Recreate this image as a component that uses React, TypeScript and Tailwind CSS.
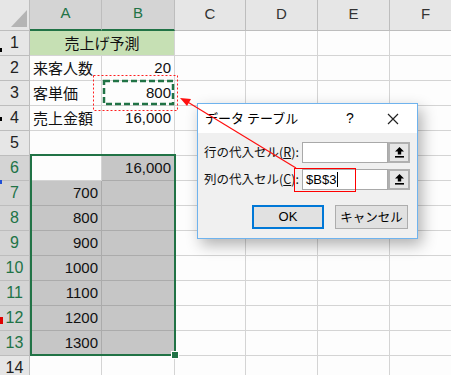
import React from "react";

const jp = { fontFamily: '"Noto Sans CJK JP", "Noto Sans", sans-serif' };
const num = { fontFamily: '"Liberation Sans", "Noto Sans CJK JP", sans-serif' };

const cols = ["A", "B", "C", "D", "E", "F"];

type Cell = { text?: string; right?: boolean; jp?: boolean; sel?: boolean };

function rowData(r: number): Cell[] {
  const base: Cell[] = [{}, {}];
  if (r === 2) {
    base[0] = { text: "来客人数", jp: true };
    base[1] = { text: "20", right: true };
  }
  if (r === 3) {
    base[0] = { text: "客単価", jp: true };
    base[1] = { text: "800", right: true };
  }
  if (r === 4) {
    base[0] = { text: "売上金額", jp: true };
    base[1] = { text: "16,000", right: true };
  }
  if (r === 6) {
    base[0] = {};
    base[1] = { text: "16,000", right: true, sel: true };
  }
  if (r >= 7 && r <= 13) {
    base[0] = { text: String(700 + (r - 7) * 100), right: true, sel: true };
    base[1] = { sel: true };
  }
  return base;
}

function UpArrow() {
  return (
    <svg width="11" height="13" viewBox="0 0 11 13">
      <polygon points="5.5,1 10,5.5 7.2,5.5 7.2,8.5 3.8,8.5 3.8,5.5 1,5.5" fill="#000" />
      <rect x="1" y="10" width="9" height="1.6" fill="#000" />
    </svg>
  );
}

export default function App() {
  const rows = Array.from({ length: 14 }, (_, i) => i + 1);
  return (
    <div className="relative w-[451px] h-[375px] overflow-hidden bg-[#fdfdfd]">
      <div
        className="grid grid-cols-[30px_72px_73px_71px_72px_72px_72px] grid-rows-[31px_repeat(14,25px)]"
        style={num}
      >
        {/* header row */}
        <div className="relative bg-[#e6e6e6] border-r border-b border-[#bdbdbd]">
          <svg className="absolute left-0 top-0" width="30" height="30">
            <polygon points="11,27 27,27 27,10" fill="#b4b4b4" />
          </svg>
        </div>
        {cols.map((c, i) => (
          <div
            key={c}
            className={
              i < 2
                ? "flex items-center justify-center bg-[#d4d4d4] border-r border-[#bdbdbd] border-b-2 border-b-[#217346] text-[15px] text-[#217346]"
                : "flex items-center justify-center bg-[#e6e6e6] border-r border-b border-[#bdbdbd] text-[15px] text-[#333]"
            }
          >
            <span className="-mt-[2px]">{c}</span>
          </div>
        ))}

        {rows.map((r) => {
          const selRow = r >= 6 && r <= 13;
          const data = rowData(r);
          return (
            <React.Fragment key={r}>
              <div
                className={
                  selRow
                    ? "flex items-center justify-center bg-[#d4d4d4] border-r border-b border-[#bdbdbd] text-[16px] text-[#217346]"
                    : "flex items-center justify-center bg-[#e6e6e6] border-r border-b border-[#bdbdbd] text-[16px] text-[#222]"
                }
              >
                {r}
              </div>
              {r === 1 ? (
                <div
                  className="col-span-2 flex items-center justify-center bg-[#c6e0b4] border-r border-b border-[#d4d4d4] text-[15px] text-[#111]"
                  style={jp}
                >
                  売上げ予測
                </div>
              ) : (
                data.map((c, i) => (
                  <div
                    key={i}
                    className={
                      (c.sel
                        ? "bg-[#c6c6c6] border-r border-b border-[#ababab] "
                        : "border-r border-b border-[#d4d4d4] ") +
                      "flex items-center text-[15px] text-[#111] " +
                      (c.right ? "justify-end pr-[3px]" : "justify-start pl-[3px]")
                    }
                    style={c.jp ? jp : num}
                  >
                    {c.text}
                  </div>
                ))
              )}
              {[2, 3, 4].map((i) => (
                <div key={i} className="border-r border-b border-[#d4d4d4]" />
              ))}
              <div className="border-b border-[#d4d4d4]" />
            </React.Fragment>
          );
        })}
      </div>

      {/* selection border */}
      <div className="absolute left-[30px] top-[154px] w-[146px] h-[202px] border-2 border-[#217346]" />
      <div className="absolute left-[171px] top-[351px] w-[8px] h-[8px] bg-[#217346] border border-white" />

      {/* left edge artifacts */}
      <div className="absolute left-0 top-[48px] w-[2px] h-[4px] bg-black" />
      <div className="absolute left-0 top-[117px] w-[2px] h-[4px] bg-black" />
      <div className="absolute left-0 top-[180px] w-[2px] h-[4px] bg-[#1f4fd6]" />
      <div className="absolute left-0 top-[317px] w-[3px] h-[7px] bg-[#e00000]" />

      {/* dialog */}
      <div
        className="absolute left-[197px] top-[103px] w-[221px] h-[136px] border border-[#6fb3ee] bg-[#f0f0f0] shadow-[4px_6px_14px_rgba(0,0,0,0.3)] flex flex-col"
        style={jp}
      >
        <div className="h-[29px] bg-white flex items-center pl-[7px] text-[13px] text-black">
          <span className="-mt-[1px] whitespace-nowrap">データ テーブル</span>
          <span className="ml-auto w-[46px] text-center text-[14px]" style={num}>
            ?
          </span>
          <span className="w-[40px] mr-[4px] flex justify-center">
            <svg width="12" height="12" viewBox="0 0 12 12">
              <path d="M1 1 L11 11 M11 1 L1 11" stroke="#222" strokeWidth="1.2" />
            </svg>
          </span>
        </div>
        <div className="flex flex-col pt-[9px] px-[6px] gap-[6px]">
          <div className="flex items-center h-[21px]">
            <span className="w-[98px] text-[12.5px] text-[#111] whitespace-nowrap">
              行の代入セル(<span className="underline">R</span>):
            </span>
            <div className="w-[86px] h-[21px] bg-white border border-[#a9a9a9]" />
            <div className="w-[22px] h-[21px] bg-[#e6e6e6] border-2 border-[#b0b0b0] flex items-center justify-center">
              <UpArrow />
            </div>
          </div>
          <div className="flex items-center h-[21px]">
            <span className="w-[98px] text-[12.5px] text-[#111] whitespace-nowrap">
              列の代入セル(<span className="underline">C</span>):
            </span>
            <div
              className="w-[86px] h-[21px] bg-white border border-[#a9a9a9] flex items-center pl-[3px] text-[13px] text-black"
              style={num}
            >
              $B$3
              <span className="ml-[1px] w-[1px] h-[15px] bg-black" />
            </div>
            <div className="w-[22px] h-[21px] bg-[#e6e6e6] border-2 border-[#b0b0b0] flex items-center justify-center">
              <UpArrow />
            </div>
          </div>
          <div className="flex justify-end gap-[11px] mt-[9px] pr-[3px]">
            <div
              className="w-[72px] h-[24px] bg-[#e1e1e1] border-2 border-[#0078d7] flex items-center justify-center text-[13px] text-black"
              style={num}
            >
              OK
            </div>
            <div className="w-[73px] h-[24px] bg-[#e1e1e1] border border-[#adadad] flex items-center justify-center text-[12.5px] text-black">
              キャンセル
            </div>
          </div>
        </div>
      </div>

      {/* red box around $B$3 */}
      <div className="absolute left-[294px] top-[168px] w-[62px] h-[24px] border border-[#ff0000]" />

      {/* overlays: marching ants, dotted red rect, arrow */}
      <svg className="absolute left-0 top-0 pointer-events-none" width="451" height="375">
        <rect
          x="104"
          y="81"
          width="69"
          height="23"
          fill="none"
          stroke="#217346"
          strokeWidth="2.5"
          strokeDasharray="6 3"
        />
        <rect
          x="93.5"
          y="75.5"
          width="84"
          height="35"
          fill="none"
          stroke="#ff2020"
          strokeWidth="1"
          strokeDasharray="2 2"
        />
        <line x1="296" y1="168" x2="186" y2="101" stroke="#ff1010" strokeWidth="1.2" />
        <polygon points="180,98 191,99 187,106" fill="#ff1010" />
      </svg>
    </div>
  );
}
